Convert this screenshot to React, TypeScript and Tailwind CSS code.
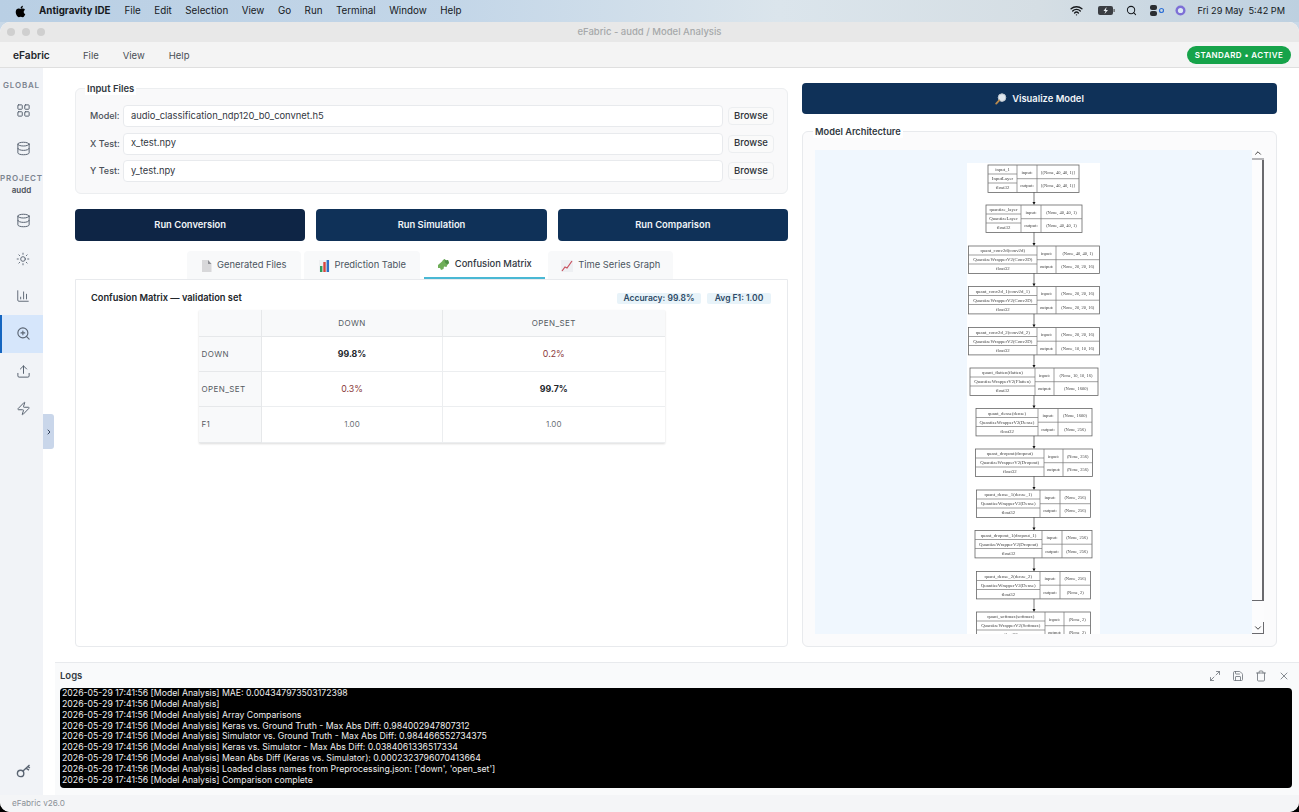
import { BarChart3, ChevronDown, ChevronRight, ChevronUp, Database, LayoutGrid, Maximize2, Save, Search, Sun, Trash, Upload, Wifi, X, Zap, ZoomIn } from "lucide-react";
import { FaApple } from "react-icons/fa";

const systemMenus = ["File", "Edit", "Selection", "View", "Go", "Run", "Terminal", "Window", "Help"];

const logLines = [
  "MAE: 0.004347973503172398",
  "",
  "Array Comparisons",
  "Keras vs. Ground Truth - Max Abs Diff: 0.984002947807312",
  "Simulator vs. Ground Truth - Max Abs Diff: 0.984466552734375",
  "Keras vs. Simulator - Max Abs Diff: 0.0384061336517334",
  "Mean Abs Diff (Keras vs. Simulator): 0.0002323796070413664",
  "Loaded class names from Preprocessing.json: ['down', 'open_set']",
  "Comparison complete",
];

type ModelNode = {
  x: number;
  y: number;
  w: number;
  a: number;
  b: number;
  name: string;
  kind: string;
  input: string;
  output: string;
};

// coordinates are relative to the white image box, a and b are the column splits
const modelNodes: ModelNode[] = [
  { x: 21, y: 2, w: 91, a: 50, b: 70, name: "input_1", kind: "InputLayer", input: "[(None, 40, 40, 1)]", output: "[(None, 40, 40, 1)]" },
  { x: 19, y: 42, w: 96, a: 54, b: 74, name: "quantize_layer", kind: "QuantizeLayer", input: "(None, 40, 40, 1)", output: "(None, 40, 40, 1)" },
  { x: 1.5, y: 83, w: 131, a: 70, b: 89, name: "quant_conv2d(conv2d)", kind: "QuantizeWrapperV2(Conv2D)", input: "(None, 40, 40, 1)", output: "(None, 20, 20, 16)" },
  { x: 1.5, y: 123.5, w: 131, a: 70, b: 89, name: "quant_conv2d_1(conv2d_1)", kind: "QuantizeWrapperV2(Conv2D)", input: "(None, 20, 20, 16)", output: "(None, 20, 20, 16)" },
  { x: 1.5, y: 164.5, w: 131, a: 70, b: 89, name: "quant_conv2d_2(conv2d_2)", kind: "QuantizeWrapperV2(Conv2D)", input: "(None, 20, 20, 16)", output: "(None, 10, 10, 16)" },
  { x: 3, y: 205, w: 128, a: 68, b: 87, name: "quant_flatten(flatten)", kind: "QuantizeWrapperV2(Flatten)", input: "(None, 10, 10, 16)", output: "(None, 1600)" },
  { x: 9, y: 245.5, w: 116, a: 71, b: 91, name: "quant_dense(dense)", kind: "QuantizeWrapperV2(Dense)", input: "(None, 1600)", output: "(None, 256)" },
  { x: 8.5, y: 286, w: 117, a: 77, b: 96, name: "quant_dropout(dropout)", kind: "QuantizeWrapperV2(Dropout)", input: "(None, 256)", output: "(None, 256)" },
  { x: 9.5, y: 327, w: 114, a: 73, b: 93, name: "quant_dense_1(dense_1)", kind: "QuantizeWrapperV2(Dense)", input: "(None, 256)", output: "(None, 256)" },
  { x: 8, y: 367.5, w: 117, a: 75, b: 95, name: "quant_dropout_1(dropout_1)", kind: "QuantizeWrapperV2(Dropout)", input: "(None, 256)", output: "(None, 256)" },
  { x: 9.5, y: 408.5, w: 114, a: 73, b: 93, name: "quant_dense_2(dense_2)", kind: "QuantizeWrapperV2(Dense)", input: "(None, 256)", output: "(None, 2)" },
  { x: 9.5, y: 449, w: 114, a: 78, b: 97, name: "quant_softmax(softmax)", kind: "QuantizeWrapperV2(Softmax)", input: "(None, 2)", output: "(None, 2)" },
];

function ModelDiagram() {
  return (
    <svg width="133" height="471" viewBox="0 0 133 471" className="block blur-[0.3px]" fontFamily="'Liberation Serif', serif" fontSize="4.8" fill="#444">
      {modelNodes.map((node, index) => {
        const next = modelNodes[index + 1];
        const h = 27.4;
        return (
          <g key={node.name}>
            <rect x={node.x} y={node.y} width={node.w} height={h} fill="none" stroke="#666" strokeWidth="0.8" />
            <path
              d={`M${node.a} ${node.y}V${node.y + h}M${node.b} ${node.y}V${node.y + h}M${node.x} ${node.y + 9}H${node.a}M${node.x} ${node.y + 18}H${node.a}M${node.a} ${node.y + 13.7}H${node.x + node.w}`}
              fill="none"
              stroke="#777"
              strokeWidth="0.7"
            />
            <g textAnchor="middle">
              <text x={(node.x + node.a) / 2} y={node.y + 6.2}>{node.name}</text>
              <text x={(node.x + node.a) / 2} y={node.y + 15.3}>{node.kind}</text>
              <text x={(node.x + node.a) / 2} y={node.y + 24.3}>float32</text>
              <text x={(node.a + node.b) / 2} y={node.y + 8.5}>input:</text>
              <text x={(node.a + node.b) / 2} y={node.y + 22.2}>output:</text>
              <text x={(node.b + node.x + node.w) / 2} y={node.y + 8.5} fontSize="4.5">{node.input}</text>
              <text x={(node.b + node.x + node.w) / 2} y={node.y + 22.2} fontSize="4.5">{node.output}</text>
            </g>
            {next ? (
              <>
                <path d={`M67 ${node.y + h}V${next.y - 2}`} stroke="#222" strokeWidth="0.6" />
                <path d={`M65.5 ${next.y - 3}H68.5L67 ${next.y}Z`} fill="#111" />
              </>
            ) : null}
          </g>
        );
      })}
    </svg>
  );
}

function SidebarIcon({ children, active = false }: { children: React.ReactNode; active?: boolean }) {
  return (
    <div className={`flex h-[37.6px] w-[43px] items-center justify-center pl-[3px] text-[#5a6472] ${active ? "bg-[#d6e6fb] text-[#2b6cb0] shadow-[inset_2px_0_0_#1565c0]" : ""}`}>
      {children}
    </div>
  );
}

function FileRow({ label, value }: { label: string; value: string }) {
  return (
    <div className="flex items-center">
      <span className="w-[34px] shrink-0 pl-[1px] text-[9px] font-medium text-[#4a5058]">{label}</span>
      <div className="flex h-[22px] w-[600px] items-center rounded-[4px] border border-[#e8eaed] bg-white pl-[7px] text-[9.4px] text-[#33383f]">
        {value}
      </div>
      <button className="ml-[5px] h-[18px] w-[46px] rounded-[4px] border border-[#eceef0] bg-[#fafafa] text-[9.5px] font-medium text-[#2d3238]">
        Browse
      </button>
    </div>
  );
}

function FileIcon() {
  return (
    <svg width="11" height="12" viewBox="0 0 11 12">
      <path d="M1 0H7L10.5 4V12H1Z" fill="#d8d8da" />
      <path d="M7 0L10.5 4H7Z" fill="#8f9095" />
    </svg>
  );
}

function BarsIcon() {
  return (
    <svg width="11" height="12" viewBox="0 0 11 12">
      <rect width="11" height="12" fill="#eef0f2" />
      <rect x="1" y="6" width="2.4" height="6" fill="#2e9e5b" />
      <rect x="4.3" y="2" width="2.4" height="10" fill="#d9433c" />
      <rect x="7.6" y="0" width="2.4" height="12" fill="#2f6fc4" />
    </svg>
  );
}

function PuzzleIcon() {
  return (
    <svg width="13" height="13" viewBox="0 0 13 13">
      <path d="M1 7L5 3.5L6 2L7.5 1L9 2.5L11 2L12 5L10.5 6.5L9.5 9L7 8.5L6.5 11L4 12L3 10L1 10Z" fill="#6fae58" />
      <path d="M7.5 1L9 2.5L11 2L12 5L10.5 6.5L8 4.5Z" fill="#4e8f45" />
    </svg>
  );
}

function TrendIcon() {
  return (
    <svg width="12" height="12" viewBox="0 0 12 12">
      <rect width="12" height="12" fill="#eef0f3" />
      <path d="M1 11L4 7L6 8L11 1" fill="none" stroke="#c8505e" strokeWidth="1.2" />
    </svg>
  );
}

function Tab({ icon, label, width, active = false }: { icon: React.ReactNode; label: string; width: string; active?: boolean }) {
  return (
    <div
      className={`flex h-[28px] items-center justify-center gap-[5px] rounded-t-[4px] pt-[1px] text-[9.4px] ${width} ${
        active ? "border-b-2 border-[#4ab8d4] bg-white font-medium text-[#2f3640]" : "bg-[#f8f9fa] text-[#4b5560]"
      }`}
    >
      {icon}
      {label}
    </div>
  );
}

function MagnifierEmoji() {
  return (
    <svg width="12" height="12" viewBox="0 0 12 12">
      <circle cx="7" cy="4.6" r="3.8" fill="#dfe7ee" stroke="#b9c3cc" strokeWidth="1" />
      <path d="M4.2 7.4L1.2 10.6" stroke="#b98a4e" strokeWidth="1.8" strokeLinecap="round" />
    </svg>
  );
}

function MatrixTable() {
  const rowHeader = "border-r border-b border-[#e6e8ea] bg-[#f8f9fa] pl-[3px] text-left text-[8px] font-normal tracking-[0.4px] text-[#555b62]";
  const cell = "border-b border-[#eceef0] text-center";
  return (
    <table className="mx-auto w-[466px] table-fixed border-collapse shadow-[0_1px_2px_rgba(0,0,0,0.14)]">
      <colgroup>
        <col className="w-[63px]" />
        <col className="w-[181px]" />
        <col className="w-[222px]" />
      </colgroup>
      <thead>
        <tr className="h-[26px] bg-[#f8f9fa] text-[8px] font-normal tracking-[0.4px] text-[#555b62]">
          <th className="border-r border-b border-[#e6e8ea]" />
          <th className="border-r border-b border-[#e6e8ea] font-normal">DOWN</th>
          <th className="border-b border-[#e6e8ea] font-normal">OPEN_SET</th>
        </tr>
      </thead>
      <tbody>
        <tr className="h-[35px]">
          <th className={rowHeader}>DOWN</th>
          <td className={`${cell} border-r text-[8.8px] font-bold text-[#22262b]`}>99.8%</td>
          <td className={`${cell} text-[8.8px] text-[#8a3a3a]`}>0.2%</td>
        </tr>
        <tr className="h-[35px]">
          <th className={rowHeader}>OPEN_SET</th>
          <td className={`${cell} border-r text-[8.8px] text-[#8a3a3a]`}>0.3%</td>
          <td className={`${cell} text-[8.8px] font-bold text-[#22262b]`}>99.7%</td>
        </tr>
        <tr className="h-[36px]">
          <th className={rowHeader}>F1</th>
          <td className={`${cell} border-r text-[8px] text-[#6a7077]`}>1.00</td>
          <td className={`${cell} text-[8px] text-[#6a7077]`}>1.00</td>
        </tr>
      </tbody>
    </table>
  );
}

export default function App() {
  return (
    <div className="h-[812px] w-[1299px] overflow-hidden bg-[linear-gradient(to_bottom,#c9d9e8_0,#c9d9e8_50%,#000_50%)] font-['Inter',sans-serif] text-[#22262b]">
      <header className="flex h-[22px] items-center justify-between bg-[linear-gradient(90deg,#b9cfe4_0%,#c3d6e8_35%,#dbe5ec_60%,#d5dee4_80%,#bdd0e0_100%)] pl-[14px] pr-[14px] text-[9.8px] text-[#16191d]">
        <div className="flex items-center">
          <FaApple className="mr-[12px] h-[13px] w-[13px] text-black" />
          <span className="mr-[14px] font-bold">Antigravity IDE</span>
          <div className="flex gap-[13.5px]">
            {systemMenus.map((menu) => (
              <span key={menu}>{menu}</span>
            ))}
          </div>
        </div>
        <div className="flex items-center">
          <Wifi className="mr-[15px] h-[13px] w-[13px]" strokeWidth={2.6} />
          <svg width="17" height="9" viewBox="0 0 17 9" className="mr-[11px]">
            <rect x="0" y="0" width="15" height="9" rx="2" fill="#3a3d42" />
            <rect x="15.5" y="3" width="1.2" height="3" fill="#555" />
            <path d="M8.5 1L5.5 5H7.5L6.5 8L10 4H8Z" fill="#e8edf0" />
          </svg>
          <Search className="mr-[13px] h-[11px] w-[11px]" strokeWidth={2.2} />
          <svg width="14" height="11" viewBox="0 0 14 11" className="mr-[11px]">
            <rect x="0" y="0" width="7" height="5" rx="2" fill="#2a2d31" />
            <rect x="0" y="6" width="7" height="5" rx="2" fill="#2a2d31" />
            <circle cx="11.5" cy="5.5" r="2" fill="none" stroke="#2c6fd6" strokeWidth="1.2" />
          </svg>
          <svg width="11" height="11" viewBox="0 0 11 11" className="mr-[12px]">
            <circle cx="5.5" cy="5.5" r="5" fill="#7d6fd6" />
            <circle cx="5.5" cy="5.5" r="2.6" fill="#dbe9f4" />
          </svg>
          <span className="mr-[5px] text-[9.2px]">Fri 29 May</span>
          <span className="text-[9.2px]">5:42 PM</span>
        </div>
      </header>

      <div className="flex h-[790px] flex-col overflow-hidden rounded-[10px] bg-white">
        <div className="relative flex h-[20px] items-center justify-center bg-[#e8e8e8] text-[9.5px] font-medium text-[#a6a8aa]">
          <div className="absolute left-[7px] flex gap-[7px]">
            <span className="h-[8px] w-[8px] rounded-full bg-[#cfcfcf]" />
            <span className="h-[8px] w-[8px] rounded-full bg-[#cfcfcf]" />
            <span className="h-[8px] w-[8px] rounded-full bg-[#cfcfcf]" />
          </div>
          eFabric - audd / Model Analysis
        </div>

        <div className="flex h-[26px] items-center border-b border-[#dfdfdf] bg-[#f4f4f4] pl-[13px] pr-[8px]">
          <span className="w-[70px] pt-[2px] text-[10.2px] font-semibold text-[#22262b]">eFabric</span>
          <div className="flex gap-[24px] pt-[3px] text-[9.5px] text-[#4a4f55]">
            <span>File</span>
            <span>View</span>
            <span>Help</span>
          </div>
          <span className="ml-auto flex h-[18px] w-[104px] items-center justify-center rounded-full bg-[#16a34a] text-[8px] font-semibold tracking-[0.4px] text-white">
            STANDARD • ACTIVE
          </span>
        </div>

        <div className="flex min-h-0 flex-1">
          <aside className="relative flex w-[43px] shrink-0 flex-col items-center bg-[#f1f3f7] pt-[11px]">
            <span className="text-[8px] font-semibold tracking-[0.8px] text-[#7c8490]">GLOBAL</span>
            <div className="mt-[1px]">
              <SidebarIcon><LayoutGrid className="h-[15px] w-[15px]" strokeWidth={1.6} /></SidebarIcon>
              <SidebarIcon><Database className="h-[15px] w-[15px]" strokeWidth={1.6} /></SidebarIcon>
            </div>
            <span className="mt-[5px] text-[8px] font-semibold tracking-[0.8px] text-[#7c8490]">PROJECT</span>
            <span className="text-[8px] font-semibold text-[#4a5058]">audd</span>
            <div className="mt-[6px]">
              <SidebarIcon><Database className="h-[15px] w-[15px]" strokeWidth={1.6} /></SidebarIcon>
              <SidebarIcon><Sun className="h-[14px] w-[14px]" strokeWidth={1.6} /></SidebarIcon>
              <SidebarIcon><BarChart3 className="h-[14px] w-[14px]" strokeWidth={1.6} /></SidebarIcon>
              <SidebarIcon active><ZoomIn className="h-[15px] w-[15px]" strokeWidth={1.8} /></SidebarIcon>
              <SidebarIcon><Upload className="h-[15px] w-[15px]" strokeWidth={1.6} /></SidebarIcon>
              <SidebarIcon><Zap className="h-[15px] w-[15px]" strokeWidth={1.6} /></SidebarIcon>
            </div>
            <svg width="15" height="15" viewBox="0 0 15 15" fill="none" stroke="#5a6472" strokeWidth="1.4" className="absolute bottom-[17px] left-[15.5px]">
              <circle cx="4.6" cy="10.4" r="3.2" />
              <path d="M7 8L13.5 2M10 5.2L13 7.2M12 3.4L13.8 5" />
            </svg>
            <div className="absolute left-[43px] top-[346px] flex h-[35px] w-[11px] items-center justify-center rounded-r-[3px] bg-[#c9d6ea]">
              <ChevronRight className="h-[8px] w-[8px] text-[#33415a]" strokeWidth={3} />
            </div>
          </aside>

          <div className="flex min-w-0 flex-1 flex-col">
            <main className="flex h-[594px] gap-[14px] pl-[32px] pr-[22px] pt-[13px]">
              <div className="flex w-[713px] shrink-0 flex-col">
                <fieldset className="h-[113px] rounded-[6px] border border-[#eceef0] bg-[#f9f9fa] px-[13px]">
                  <legend className="ml-[-4px] bg-white px-[2px] pt-[2px] text-[9.5px] font-semibold leading-[12px] text-[#333a42]">Input Files</legend>
                  <div className="mt-[10px] flex flex-col gap-[5.5px]">
                    <FileRow label="Model:" value="audio_classification_ndp120_b0_convnet.h5" />
                    <FileRow label="X Test:" value="x_test.npy" />
                    <FileRow label="Y Test:" value="y_test.npy" />
                  </div>
                </fieldset>

                <div className="mt-[15px] flex gap-[11px] text-[9.4px] font-semibold text-[#f2f5f8]">
                  <button className="h-[32px] flex-1 rounded-[4px] bg-[#0e2545] pt-[1px]">Run Conversion</button>
                  <button className="h-[32px] flex-1 rounded-[4px] bg-[#0f3158] pt-[1px]">Run Simulation</button>
                  <button className="h-[32px] flex-1 rounded-[4px] bg-[#0f3158] pt-[1px]">Run Comparison</button>
                </div>

                <div className="mt-[10px] flex justify-center gap-[3.5px] pr-[3px]">
                  <Tab icon={<FileIcon />} label="Generated Files" width="w-[114px]" />
                  <Tab icon={<BarsIcon />} label="Prediction Table" width="w-[116px]" />
                  <Tab icon={<PuzzleIcon />} label="Confusion Matrix" width="w-[121px]" active />
                  <Tab icon={<TrendIcon />} label="Time Series Graph" width="w-[125px]" />
                </div>

                <section className="h-[368px] rounded-b-[4px] border border-[#e8eaed] bg-white">
                  <div className="flex h-[30px] items-center justify-between pl-[15px] pr-[16px] pt-[6px]">
                    <h2 className="text-[9.25px] font-semibold text-[#22262b]">Confusion Matrix — validation set</h2>
                    <div className="flex gap-[6px] text-[8.5px] font-semibold text-[#2d4a66]">
                      <span className="flex h-[11px] w-[84px] items-center justify-center rounded-[2px] bg-[#e8f3f9]">Accuracy: 99.8%</span>
                      <span className="flex h-[11px] w-[64px] items-center justify-center rounded-[2px] bg-[#e8f3f9]">Avg F1: 1.00</span>
                    </div>
                  </div>
                  <MatrixTable />
                </section>
              </div>

              <div className="flex min-w-0 flex-1 flex-col pt-[2px]">
                <button className="flex h-[31px] items-center justify-center gap-[5px] rounded-[4px] bg-[#0f3158] pt-[1px] text-[9.4px] font-semibold text-[#f2f5f8]">
                  <MagnifierEmoji />
                  Visualize Model
                </button>
                <fieldset className="mt-[10px] h-[523px] rounded-[6px] border border-[#e8eaed] bg-[#fbfbfc] pl-[12px] pr-[12px]">
                  <legend className="ml-[-2px] bg-white px-[2px] pt-[2px] text-[9.25px] font-semibold leading-[12px] text-[#333a42]">Model Architecture</legend>
                  <div className="mt-[12px] flex h-[484px] bg-[#f0f7fe]">
                    <div className="flex min-w-0 flex-1 justify-center pt-[13px]">
                      <div className="h-[471px] w-[133px] overflow-hidden bg-white">
                        <ModelDiagram />
                      </div>
                    </div>
                    <div className="flex w-[12px] shrink-0 flex-col bg-[#fcfcfd] text-[#444]">
                      <div className="flex h-[10px] items-end justify-center border-b-2 border-[#b5b5b8]">
                        <ChevronUp className="h-[10px] w-[10px]" strokeWidth={2.4} />
                      </div>
                      <div className="h-[441px] border-b border-r-2 border-[#6a6a6e]" />
                      <div className="flex flex-1 items-end">
                        <div className="flex h-[12px] w-[12px] items-center justify-center border-b border-r border-[#6a6a6e]">
                          <ChevronDown className="h-[10px] w-[10px]" strokeWidth={2.4} />
                        </div>
                      </div>
                    </div>
                  </div>
                </fieldset>
              </div>
            </main>

            <section className="ml-[12px] flex h-[133px] flex-col border-t border-[#e8eaed] bg-[#f9fafb] pl-[5px] pr-[7px]">
              <div className="flex h-[25px] shrink-0 items-center justify-between pr-[2px]">
                <span className="pt-[2px] text-[9.5px] font-semibold text-[#333a42]">Logs</span>
                <div className="flex items-center gap-[11px] text-[#6a7077]">
                  <Maximize2 className="h-[12px] w-[12px]" strokeWidth={1.6} />
                  <Save className="h-[12px] w-[12px]" strokeWidth={1.6} />
                  <Trash className="h-[12px] w-[12px]" strokeWidth={1.6} />
                  <X className="h-[12px] w-[12px]" strokeWidth={1.6} />
                </div>
              </div>
              <div className="h-[100px] rounded-[4px] bg-black pl-[2px] text-[8.72px] leading-[10.85px] text-[#eeeeee]">
                {logLines.map((line, index) => (
                  <div key={index} className="h-[10.85px] whitespace-pre">2026-05-29 17:41:56 [Model Analysis] {line}</div>
                ))}
              </div>
            </section>
          </div>
        </div>

        <footer className="flex h-[17px] shrink-0 items-center bg-[#f4f5f7] pl-[12px] text-[8.2px] text-[#8b9198]">eFabric v26.0</footer>
      </div>
    </div>
  );
}
